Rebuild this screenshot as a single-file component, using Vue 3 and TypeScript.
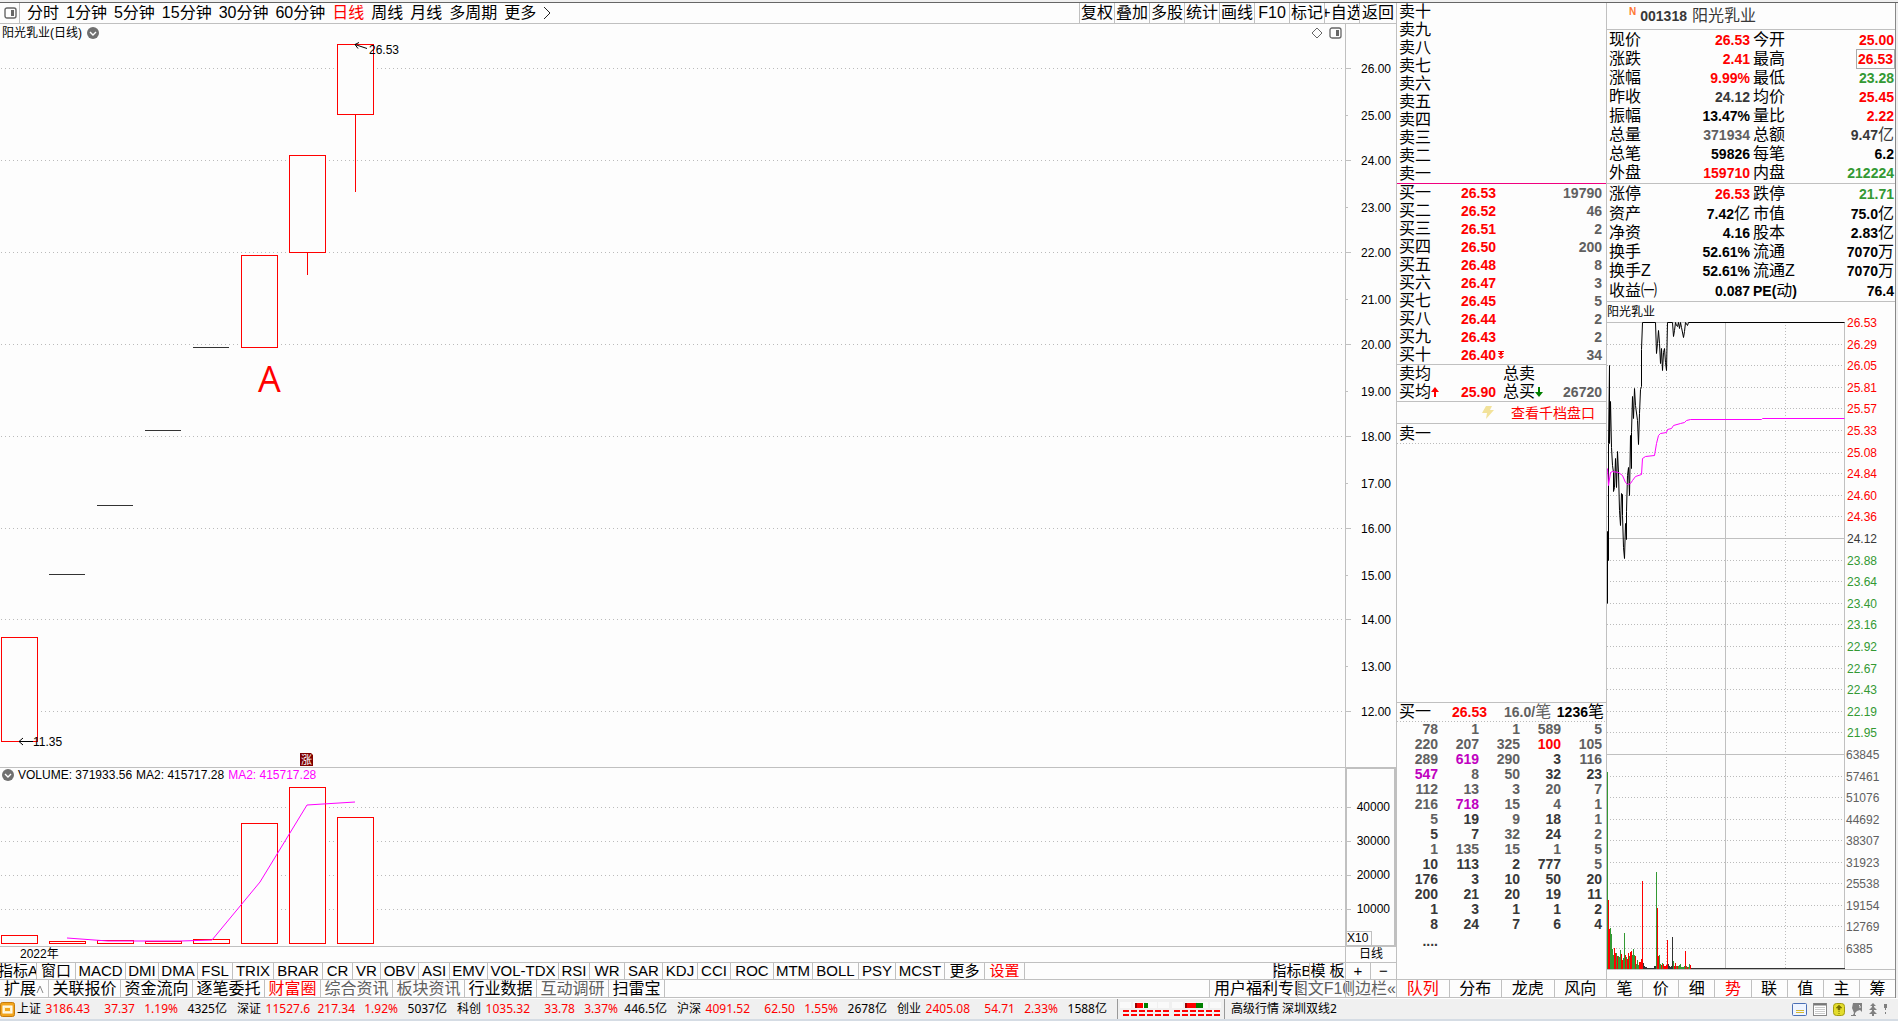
<script setup lang="ts">
type Tone = 'up' | 'down' | 'mute' | 'dim' | 'ink' | 'big'

interface Cell { label: string; value: string; unit?: string; tone: Tone; boxed?: boolean }
interface Tab { text: string; width: number; tone?: string }

const periods = ['分时', '1分钟', '5分钟', '15分钟', '30分钟', '60分钟', '日线', '周线', '月线', '多周期', '更多']
const tools = ['复权', '叠加', '多股', '统计', '画线', 'F10', '标记', '+自选', '返回']

const priceTicks = [44, 91, 136, 183, 228, 275, 320, 367, 412, 459, 504, 551, 595, 642, 687].map((y, i) => ({
  y,
  label: (26 - i).toFixed(2),
  major: i % 2 === 0,
}))
const flats = [
  { x: 49, y: 550 },
  { x: 97, y: 481 },
  { x: 145, y: 406 },
  { x: 193, y: 323 },
]
const candles = [
  { x: 1, top: 613, bottom: 717, low: 717 },
  { x: 241, top: 231, bottom: 323, low: 323 },
  { x: 289, top: 131, bottom: 228, low: 251 },
  { x: 337, top: 20, bottom: 90, low: 168 },
]
const volumeTops = [167, 173, 172, 173, 171, 55, 19, 49]
const volumeTicks = [
  { y: 39, label: '40000' },
  { y: 73, label: '30000' },
  { y: 107, label: '20000' },
  { y: 141, label: '10000' },
]

const indicators: Tab[] = [
  { text: '指标A', width: 37 }, { text: '窗口', width: 39 }, { text: 'MACD', width: 50 }, { text: 'DMI', width: 33 },
  { text: 'DMA', width: 39 }, { text: 'FSL', width: 35 }, { text: 'TRIX', width: 41 }, { text: 'BRAR', width: 49 },
  { text: 'CR', width: 30 }, { text: 'VR', width: 28 }, { text: 'OBV', width: 38 }, { text: 'ASI', width: 31 },
  { text: 'EMV', width: 38 }, { text: 'VOL-TDX', width: 71 }, { text: 'RSI', width: 31 }, { text: 'WR', width: 35 },
  { text: 'SAR', width: 38 }, { text: 'KDJ', width: 35 }, { text: 'CCI', width: 33 }, { text: 'ROC', width: 43 },
  { text: 'MTM', width: 39 }, { text: 'BOLL', width: 46 }, { text: 'PSY', width: 37 }, { text: 'MCST', width: 49 },
  { text: '更多', width: 40 }, { text: '设置', width: 40, tone: 'up' },
]
const indicatorTools: Tab[] = [
  { text: '指标B', width: 36 }, { text: '模 板', width: 36 }, { text: '+', width: 25 }, { text: '−', width: 25 },
]
const links: Tab[] = [
  { text: '扩展', width: 49 }, { text: '关联报价', width: 72 }, { text: '资金流向', width: 72 },
  { text: '逐笔委托', width: 72 }, { text: '财富圈', width: 56, tone: 'up' }, { text: '综合资讯', width: 72, tone: 'mute' },
  { text: '板块资讯', width: 72, tone: 'mute' }, { text: '行业数据', width: 72 }, { text: '互动调研', width: 72, tone: 'mute' },
  { text: '扫雷宝', width: 56 },
]
const linkTools: Tab[] = [
  { text: '用户福利专区', width: 88, tone: 'from-start' },
  { text: '图文F10', width: 48, tone: 'mute' },
  { text: '侧边栏«', width: 50, tone: 'mute from-end' },
]

const numerals = ['一', '二', '三', '四', '五', '六', '七', '八', '九', '十']
const asks = [...numerals].reverse().map((n) => `卖${n}`)
const bids = [
  ['26.53', '19790'], ['26.52', '46'], ['26.51', '2'], ['26.50', '200'], ['26.48', '8'],
  ['26.47', '3'], ['26.45', '5'], ['26.44', '2'], ['26.43', '2'], ['26.40', '34'],
].map(([price, volume], i) => ({ label: `买${numerals[i]}`, price, volume }))

// A suffix selects the shade: d dark, r red, p purple; plain values are grey.
const queue: string[][] = [
  ['78', '1', '1', '589', '5'],
  ['220', '207', '325', '100r', '105'],
  ['289', '619p', '290', '3d', '116'],
  ['547p', '8', '50', '32d', '23d'],
  ['112', '13', '3', '20', '7'],
  ['216', '718p', '15', '4', '1'],
  ['5', '19d', '9', '18d', '1'],
  ['5d', '7d', '32', '24d', '2'],
  ['1', '135', '15', '1', '5'],
  ['10d', '113d', '2d', '777d', '5'],
  ['176d', '3d', '10d', '50d', '20d'],
  ['200d', '21d', '20d', '19d', '11d'],
  ['1d', '3d', '1d', '1d', '2d'],
  ['8d', '24d', '7d', '6d', '4d'],
]
const shadeOf = (v: string): string => {
  const s = v.slice(-1)
  return s === 'd' ? 'dim' : s === 'r' ? 'up' : s === 'p' ? 'big' : 'mute'
}
const digits = (v: string): string => v.replace(/[a-z]/, '')

const quotes: Cell[][] = [
  [{ label: '现价', value: '26.53', tone: 'up' }, { label: '今开', value: '25.00', tone: 'up' }],
  [{ label: '涨跌', value: '2.41', tone: 'up' }, { label: '最高', value: '26.53', tone: 'up', boxed: true }],
  [{ label: '涨幅', value: '9.99%', tone: 'up' }, { label: '最低', value: '23.28', tone: 'down' }],
  [{ label: '昨收', value: '24.12', tone: 'dim' }, { label: '均价', value: '25.45', tone: 'up' }],
  [{ label: '振幅', value: '13.47%', tone: 'ink' }, { label: '量比', value: '2.22', tone: 'up' }],
  [{ label: '总量', value: '371934', tone: 'mute' }, { label: '总额', value: '9.47', unit: '亿', tone: 'dim' }],
  [{ label: '总笔', value: '59826', tone: 'ink' }, { label: '每笔', value: '6.2', tone: 'ink' }],
  [{ label: '外盘', value: '159710', tone: 'up' }, { label: '内盘', value: '212224', tone: 'down' }],
]
const facts: Cell[][] = [
  [{ label: '涨停', value: '26.53', tone: 'up' }, { label: '跌停', value: '21.71', tone: 'down' }],
  [{ label: '资产', value: '7.42', unit: '亿', tone: 'ink' }, { label: '市值', value: '75.0', unit: '亿', tone: 'ink' }],
  [{ label: '净资', value: '4.16', tone: 'ink' }, { label: '股本', value: '2.83', unit: '亿', tone: 'ink' }],
  [{ label: '换手', value: '52.61%', tone: 'ink' }, { label: '流通', value: '7070', unit: '万', tone: 'ink' }],
  [{ label: '换手Z', value: '52.61%', tone: 'ink' }, { label: '流通Z', value: '7070', unit: '万', tone: 'ink' }],
  [{ label: '收益㈠', value: '0.087', tone: 'ink' }, { label: 'PE(动)', value: '76.4', tone: 'ink' }],
]
const quoteBlocks = [quotes, facts]

const minutePrices = [
  '26.53', '26.29', '26.05', '25.81', '25.57', '25.33', '25.08', '24.84', '24.60', '24.36',
  '24.12', '23.88', '23.64', '23.40', '23.16', '22.92', '22.67', '22.43', '22.19', '21.95',
].map((label, i) => ({ label, y: Math.round(i * 21.6), tone: i < 10 ? 'up' : i === 10 ? 'dim' : 'down' }))
const minuteVolumes = ['63845', '57461', '51076', '44692', '38307', '31923', '25538', '19154', '12769', '6385'].map(
  (label, i) => ({ label, y: 432 + Math.round(i * 21.5) }),
)
const pricePath =
  '0,281 0,209 1,238 1,121 2,43 2,121 3,79 4,125 5,143 6,150 6,169 7,165 8,136 9,165 10,129 11,150 12,188 13,203 14,171 15,172 15,193 16,225 17,236 18,201 19,217 19,189 20,153 21,145 22,173 23,113 24,146 24,110 25,74 26,96 27,66 28,83 30,98 31,122 32,91 33,67 34,64 34,27 35,0 48,0 49,31 50,21 51,8 52,21 53,41 54,26 55,48 56,30 57,26 58,40 59,48 60,0 65,0 66,14 67,8 68,0 69,3 70,4 71,0 72,6 73,0 74,5 76,15 77,9 78,0 80,3 81,0 237,0'
const averagePath =
  '0,146 1,163 3,150 5,149 11,150 15,153 18,160 20,162 23,161 25,158 28,154 34,152 35,136 38,134 47,133 49,121 51,113 53,111 59,110 60,107 64,106 66,103 73,101 77,100 79,98 83,97 154,97 155,96 237,96'
const minuteBars = (
  'g197 r69 r40 g41 g35 g20 g14 r21 r16 g16 r13 g13 g12 g19 r15 r9 g11 g36 r14 g12 r10 r16 g13 r17 r18 g14 g20 g14 r13 g5 g9 g4 r7 r7 r10 r88 ' +
  'k6 k3 k2 k2 k1 k1 k1 k1 k1 k1 k1 k3 k3 g97 r61 r13 g14 g5 r4 g6 r5 r3 r3 r4 r29 k5 k3 k2 k3 k32 g8 r3 r6 g3 r3 g3 g4 g5 g2 g2 g2 g3 r18 g3 r2 g2 g5 r4'
).split(' ').map((s, x) => ({ x, h: Number(s.slice(1)), kind: s[0] }))

const markets = [
  ['上证', '3186.43', '37.37', '1.19%', '4325亿'],
  ['深证', '11527.6', '217.34', '1.92%', '5037亿'],
  ['科创', '1035.32', '33.78', '3.37%', '446.5亿'],
  ['沪深', '4091.52', '62.50', '1.55%', '2678亿'],
  ['创业', '2405.08', '54.71', '2.33%', '1588亿'],
]
const depthTabs = ['队列', '分布', '龙虎', '风向']
const detailTabs = ['笔', '价', '细', '势', '联', '值', '主', '筹']
</script>

<template>
  <div class="app">
    <div class="window-edge"></div>
    <main class="workspace">
      <section class="kline">
        <nav class="toolbar">
          <button class="panel-toggle" type="button" aria-label="面板">
            <svg width="14" height="12" viewBox="0 0 14 12">
              <rect x="1" y="1" width="11" height="10" rx="2" fill="none" stroke="#666" stroke-width="1.4" />
              <rect x="7" y="3" width="3" height="6" fill="#666" />
            </svg>
          </button>
          <div class="periods">
            <button v-for="p in periods" :key="p" type="button" :class="{ up: p === '日线' }">{{ p }}</button>
            <svg width="9" height="14" viewBox="0 0 9 14"><path d="M1 1L7 7L1 13" fill="none" stroke="#222" /></svg>
          </div>
          <div class="tools">
            <button v-for="t in tools" :key="t" type="button">{{ t }}</button>
          </div>
        </nav>

        <div class="chart price-chart">
          <div class="plot">
            <svg class="canvas">
              <line v-for="t in priceTicks.filter((p) => p.major)" :key="t.y" class="dots" x1="1" x2="100%" :y1="t.y + 0.5" :y2="t.y + 0.5" />
              <line v-for="f in flats" :key="f.x" class="flat" :x1="f.x" :x2="f.x + 36" :y1="f.y + 0.5" :y2="f.y + 0.5" />
              <g v-for="c in candles" :key="c.x">
                <rect class="clear" :x="c.x - 3" :y="c.top" width="43" :height="c.bottom - c.top + 1" />
                <rect class="candle" :x="c.x + 0.5" :y="c.top + 0.5" width="36" :height="c.bottom - c.top" />
                <line class="candle" :x1="c.x + 18.5" :x2="c.x + 18.5" :y1="c.bottom" :y2="c.low" />
              </g>
              <path class="pointer" d="M355 20.5L367 24.5M359 18.5L355 20.5L358 24.5" />
              <text class="mark" x="369" y="30">26.53</text>
              <path class="pointer" d="M19 717.5H33M23 714L19 717.5L23 721" />
              <text class="mark" x="33" y="722">11.35</text>
              <text class="letter" x="258" y="368">A</text>
              <path d="M300 729H311L313 731V742H300Z" fill="#7f0000" />
              <text class="badge" x="301" y="740">涨</text>
            </svg>
            <h1 class="plot-title">
              阳光乳业(日线)
              <svg width="12" height="12" viewBox="0 0 12 12">
                <circle cx="6" cy="6" r="6" fill="#707070" />
                <path d="M3 5L6 8L9 5" fill="none" stroke="#fff" stroke-width="1.4" />
              </svg>
            </h1>
            <div class="plot-icons">
              <svg width="12" height="12" viewBox="0 0 12 12"><path d="M6 1L11 6L6 11L1 6Z" fill="none" stroke="#666" /></svg>
              <svg width="13" height="12" viewBox="0 0 13 12">
                <rect x="1" y="1" width="11" height="10" rx="2" fill="none" stroke="#666" stroke-width="1.3" />
                <rect x="7" y="3" width="3" height="6" fill="#666" />
              </svg>
            </div>
          </div>
          <svg class="axis">
            <g v-for="t in priceTicks" :key="t.y">
              <line class="tick" x1="0" :x2="t.major ? 5 : 2" :y1="t.y + 0.5" :y2="t.y + 0.5" />
              <text class="mark" x="45" :y="t.y + 5" text-anchor="end">{{ t.label }}</text>
            </g>
          </svg>
        </div>

        <div class="chart volume-chart">
          <div class="plot">
            <svg class="canvas">
              <line v-for="t in volumeTicks" :key="t.y" class="dots" x1="1" x2="100%" :y1="t.y + 0.5" :y2="t.y + 0.5" />
              <g v-for="(top, i) in volumeTops" :key="i">
                <rect class="clear" :x="i * 48 - 2" :y="top" width="43" :height="176 - top" />
                <rect class="candle" :x="i * 48 + 1.5" :y="top + 0.5" width="36" :height="175 - top" />
              </g>
              <polyline class="average" points="67,170 108,173 181,173 212,172 260,114 307,37 355,34" />
            </svg>
            <h2 class="plot-title">
              <svg width="12" height="12" viewBox="0 0 12 12">
                <circle cx="6" cy="6" r="6" fill="#707070" />
                <path d="M3 5L6 8L9 5" fill="none" stroke="#fff" stroke-width="1.4" />
              </svg>
              <span>VOLUME: 371933.56</span><span>MA2: 415717.28</span><span class="pink">MA2: 415717.28</span>
            </h2>
          </div>
          <div class="axis framed">
            <svg class="canvas">
              <g v-for="t in volumeTicks" :key="t.y">
                <line class="tick" x1="0" x2="4" :y1="t.y - 0.5" :y2="t.y - 0.5" />
                <text class="mark" x="43" :y="t.y + 3" text-anchor="end">{{ t.label }}</text>
              </g>
            </svg>
            <span class="scale">X10</span>
          </div>
        </div>

        <div class="date-row"><span class="year">2022年</span><span class="cycle">日线</span></div>

        <nav class="tab-row indicators">
          <button v-for="t in indicators" :key="t.text" type="button" :class="t.tone" :style="{ width: t.width + 'px' }">{{ t.text }}</button>
          <span class="spacer"></span>
          <button v-for="t in indicatorTools" :key="t.text" type="button" :style="{ width: t.width + 'px' }">{{ t.text }}</button>
        </nav>
        <nav class="tab-row links">
          <button v-for="t in links" :key="t.text" type="button" :class="t.tone" :style="{ width: t.width + 'px' }">
            {{ t.text }}<svg v-if="t.text === '扩展'" width="8" height="10" viewBox="0 0 8 10"><path d="M1 9L4 2L7 9" fill="none" stroke="#888" /></svg>
          </button>
          <span class="spacer"></span>
          <button v-for="t in linkTools" :key="t.text" type="button" :class="t.tone" :style="{ width: t.width + 'px' }">{{ t.text }}</button>
        </nav>
      </section>

      <section class="depth">
        <table class="book asks">
          <tbody>
            <tr v-for="a in asks" :key="a"><th scope="row">{{ a }}</th><td></td><td></td></tr>
          </tbody>
        </table>
        <table class="book bids">
          <tbody>
            <tr v-for="b in bids" :key="b.label">
              <th scope="row">{{ b.label }}</th>
              <td class="up">{{ b.price }}<svg v-if="b.label === '买十'" width="6" height="9" viewBox="0 0 6 9"><path d="M0 0H6V1H4V2H6L3 5L0 2H2V1H0ZM0 5H2L3 6L4 5H6L3 8Z" fill="#f00" /></svg></td>
              <td class="mute">{{ b.volume }}</td>
            </tr>
          </tbody>
        </table>
        <table class="book totals">
          <tbody>
            <tr><th scope="row">卖均</th><td></td><th scope="row">总卖</th><td></td></tr>
            <tr>
              <th scope="row">买均<svg width="8" height="10" viewBox="0 0 8 10"><path d="M0 5L4 0L8 5H5V10H3V5Z" fill="#f00" /></svg></th>
              <td class="up">25.90</td>
              <th scope="row">总买<svg width="8" height="10" viewBox="0 0 8 10"><path d="M0 5L4 10L8 5H5V0H3V5Z" fill="#007f00" /></svg></th>
              <td class="mute">26720</td>
            </tr>
          </tbody>
        </table>
        <div class="more-depth">
          <svg width="12" height="13" viewBox="0 0 12 13"><path d="M4 0H10L8 4H12L4 13L5 7H0Z" fill="#f2e29a" /></svg>
          <a href="#">查看千档盘口</a>
        </div>
        <div class="queue-title">卖一</div>
        <div class="queue-space"></div>
        <div class="queue-head">
          <span>买一</span><b class="up">26.53</b><b class="mute">16.0/<i>笔</i></b><b>1236<i>笔</i></b>
        </div>
        <div class="queue-body">
          <table class="queue">
            <tbody>
              <tr v-for="(row, r) in queue" :key="r"><td v-for="(v, c) in row" :key="c" :class="shadeOf(v)">{{ digits(v) }}</td></tr>
              <tr class="etc"><td class="dim">....</td><td colspan="4"></td></tr>
            </tbody>
          </table>
        </div>
        <nav class="tab-row even">
          <button v-for="t in depthTabs" :key="t" type="button" :class="{ up: t === '队列' }">{{ t }}</button>
        </nav>
      </section>

      <section class="detail">
        <header class="stock"><sup>N</sup><b>001318</b><span>阳光乳业</span></header>
        <table v-for="(block, k) in quoteBlocks" :key="k" class="quote">
          <tbody>
            <tr v-for="(pair, r) in block" :key="r">
              <template v-for="c in pair" :key="c.label">
                <th scope="row"><template v-if="c.label === 'PE(动)'"><b>PE(</b>动<b>)</b></template><template v-else>{{ c.label }}</template></th>
                <td :class="c.tone"><span :class="{ boxed: c.boxed }">{{ c.value }}<i v-if="c.unit">{{ c.unit }}</i></span></td>
              </template>
            </tr>
          </tbody>
        </table>
        <h2 class="minute-title">阳光乳业</h2>
        <div class="minute">
          <svg class="canvas">
            <g v-for="p in minutePrices" :key="p.label">
              <line :class="p.y === 0 || p.y === 216 ? 'solid' : 'fine'" x1="0" x2="237" :y1="p.y + 0.5" :y2="p.y + 0.5" />
              <text class="mark" :class="p.tone" x="240" :y="p.y + 5">{{ p.label }}</text>
            </g>
            <g v-for="(v, i) in minuteVolumes" :key="v.label">
              <line :class="i === 0 ? 'solid' : 'fine'" x1="0" x2="237" :y1="v.y + 0.5" :y2="v.y + 0.5" />
              <text class="mark mute" x="239" :y="v.y + 5">{{ v.label }}</text>
            </g>
            <line class="fine" x1="59.5" x2="59.5" y1="0" y2="647" />
            <line class="solid" x1="118.5" x2="118.5" y1="0" y2="647" />
            <line class="fine" x1="178.5" x2="178.5" y1="0" y2="647" />
            <line class="solid" x1="237.5" x2="237.5" y1="0" y2="647" />
            <line class="solid" x1="0" x2="100%" y1="647.5" y2="647.5" />
            <rect v-for="b in minuteBars" :key="b.x" :class="'bar-' + b.kind" :x="b.x" :y="647 - b.h" width="1" :height="b.h" />
            <rect class="bar-k" x="84" y="646" width="154" height="1" />
            <g transform="translate(.5 .5)">
              <polyline class="trace" :points="pricePath" />
              <polyline class="average" :points="averagePath" />
            </g>
          </svg>
        </div>
        <nav class="tab-row even">
          <button v-for="t in detailTabs" :key="t" type="button" :class="{ up: t === '势' }">{{ t }}</button>
        </nav>
      </section>
    </main>

    <footer class="status">
      <svg class="home" width="15" height="15" viewBox="0 0 15 15">
        <rect x=".5" y=".5" width="14" height="14" rx="2" fill="#f2a51c" stroke="#c77b0b" />
        <rect x="3" y="4" width="9" height="7" fill="#fff2c4" stroke="#fff" />
        <rect x="5" y="6" width="5" height="3" fill="#f2a51c" />
      </svg>
      <div v-for="m in markets" :key="m[0]" class="market">
        <span>{{ m[0] }}</span><span class="up">{{ m[1] }}</span><span class="up">{{ m[2] }}</span><span class="up">{{ m[3] }}</span><span>{{ m[4] }}</span>
      </div>
      <div class="heat">
        <svg width="102" height="16" viewBox="0 0 102 16">
          <g fill="#fafafa">
            <rect x="0" y="1" width="11" height="6" /><rect x="13" y="1" width="11" height="6" /><rect x="26" y="1" width="11" height="6" /><rect x="38" y="1" width="11" height="6" />
            <rect x="52" y="1" width="11" height="6" /><rect x="65" y="1" width="11" height="6" /><rect x="77" y="1" width="11" height="6" /><rect x="90" y="1" width="11" height="6" />
          </g>
          <path d="M15 2h2v5h-2zM65 2h2v5h-2z" fill="#900" />
          <path d="M17 2h6v5h-6zM67 2h9v5h-9z" fill="#f00" />
          <path d="M24 2h4v5h-4zM76 2h7v5h-7z" fill="#008000" />
          <path d="M3 10H50M3 14H50M54 10H101M54 14H101" stroke="#f00" stroke-width="2" stroke-dasharray="6 2" />
        </svg>
      </div>
      <span class="server">高级行情 深圳双线2</span>
      <span class="spacer"></span>
      <div class="tray">
        <svg width="15" height="13" viewBox="0 0 15 13"><rect x=".5" y=".5" width="14" height="12" rx="1" fill="#eef4ff" stroke="#4a6fb5" /><path d="M4 7.5H12M4 9.5H12" stroke="#d6ba30" /></svg>
        <svg width="14" height="13" viewBox="0 0 14 13"><rect x=".5" y=".5" width="13" height="12" fill="#fff" stroke="#888" /><path d="M1 1.5H13" stroke="#777" stroke-width="2" /><path d="M2 4.5H12M2 6.5H12M2 8.5H12M2 10.5H12" stroke="#ccc" /></svg>
        <svg width="12" height="13" viewBox="0 0 12 13"><rect x=".5" y=".5" width="11" height="12" rx="3" fill="#e3dc2c" stroke="#a39b10" /><path d="M3 5L6 2L9 5H7V7H5V5ZM5 8.5H7M5 10.5H7" fill="#746e00" stroke="#746e00" stroke-width=".5" /></svg>
        <svg width="12" height="13" viewBox="0 0 12 13"><path d="M2 0H11V9L9 7L6 8L4 10V12H5V13H0V12H2L3 10L1 5Z" fill="#808080" /><path d="M8 2L9 3V5" fill="none" stroke="#eee" /></svg>
        <svg width="8" height="13" viewBox="0 0 8 13"><path d="M4 0L7 3H5V4L8 7H5V8L8 11H5V13H3V11H0L3 8V7H0L3 4V3H1Z" fill="#808080" /></svg>
        <svg width="5" height="13" viewBox="0 0 5 13"><path d="M1 1H4V5H3V7H2V5H1ZM2 9H3V11H2Z" fill="#808080" /></svg>
      </div>
    </footer>
    <div class="task-edge"></div>
  </div>
</template>

<style>
body { margin: 0; }
</style>

<style scoped>
.app {
  --line: #c0c0c0;
  --red: #f00;
  --green: #339933;
  min-height: 100vh;
  display: flex;
  flex-direction: column;
  background: #fdfdfd;
  color: #000;
  font: 16px/16px "Liberation Sans", "Noto Sans CJK SC", sans-serif;
  white-space: nowrap;
}
.window-edge { height: 2px; background: #f0f0f0; border-bottom: 1px solid #666; }
.workspace { flex: 1; display: flex; padding-right: 2px; background: #f0f0f0; }
.workspace > section { display: flex; flex-direction: column; background: #fdfdfd; border-right: 1px solid var(--line); box-sizing: border-box; }
.kline { flex: 1; min-width: 0; }
.depth { width: 210px; }
.workspace > .detail { width: 289px; border-right-color: #888; }
button { margin: 0; padding: 0; border: 0; background: none; color: inherit; font: inherit; white-space: nowrap; overflow: hidden; }
h1, h2 { margin: 0; font-size: 12px; font-weight: 400; line-height: 12px; }
table { width: 100%; border-collapse: separate; border-spacing: 0; table-layout: fixed; }
th, td { padding: 0; font-weight: 400; text-align: left; }
td { font-size: 14px; font-weight: 700; }
i { font-style: normal; font-weight: 400; font-size: 16px; }
b { font-size: 14px; }
.up { color: var(--red); fill: var(--red); }
.down { color: var(--green); fill: var(--green); }
.mute { color: #606060; fill: #606060; }
.dim { color: #383838; fill: #383838; }
.big { color: #c000c0; }
.pink { color: #f0f; }
.spacer { flex: 1; }

.toolbar { display: flex; height: 20px; border-bottom: 1px solid var(--line); }
.panel-toggle { width: 20px; padding-left: 2px; border-right: 1px solid var(--line); display: flex; align-items: center; justify-content: center; }
.periods { flex: 1; display: flex; align-items: center; gap: 7px; padding-left: 7px; }
.tools { display: flex; }
.tools button { width: 35px; border-left: 1px solid var(--line); display: flex; align-items: center; justify-content: center; }
.tools button:last-child { width: 37px; }

.chart { display: flex; border-bottom: 1px solid var(--line); }
.price-chart { flex: 1; min-height: 740px; }
.volume-chart { height: 178px; }
.plot { flex: 1; position: relative; min-width: 0; }
.canvas { display: block; width: 100%; height: 100%; overflow: visible; }
.plot-title { position: absolute; left: 2px; top: 3px; display: flex; align-items: center; gap: 5px; }
.volume-chart .plot-title { top: 1px; gap: 4px; }
.plot-icons { position: absolute; right: 3px; top: 3px; display: flex; gap: 6px; }
.axis { width: 50px; border-left: 1px solid var(--line); }
.framed { width: 47px; border: 2px solid var(--line); border-top-width: 1px; border-bottom-width: 1px; position: relative; }
.scale { position: absolute; left: 0; bottom: 0; width: 24px; border: 1px solid var(--line); border-left: 0; border-bottom: 0; font-size: 12px; line-height: 13px; }
.dots { stroke: #bbb; stroke-dasharray: 1 3; }
.fine { stroke: #bbb; stroke-dasharray: 1 2; }
.solid, .tick { stroke: var(--line); }
.dots, .fine, .solid, .tick, .candle, .flat { shape-rendering: crispEdges; }
.clear { fill: #fdfdfd; }
.candle { fill: none; stroke: var(--red); }
.flat { stroke: #333; }
.pointer { fill: none; stroke: #000; }
.average { fill: none; stroke: #f0f; }
.trace { fill: none; stroke: #000; }
.mark { font-size: 12px; }
.letter { font: 36px "Open Sans", "Noto Sans", sans-serif; fill: var(--red); }
.badge { font-size: 11px; fill: #fff; }

.date-row { display: flex; height: 15px; border-bottom: 1px solid var(--line); font-size: 12px; line-height: 15px; }
.year { flex: 1; padding-left: 20px; }
.cycle { width: 50px; border-left: 1px solid var(--line); text-align: center; }

.tab-row { display: flex; height: 17px; border-bottom: 1px solid var(--line); }
.tab-row button { box-sizing: border-box; border-right: 1px solid var(--line); display: flex; align-items: center; justify-content: center; flex-shrink: 0; }
.tab-row .spacer { border-right: 1px solid var(--line); }
.tab-row button:last-child { border-right: 0; }
.tab-row .from-start { justify-content: flex-start; padding-left: 4px; }
.tab-row .from-end { justify-content: flex-end; }
.indicators { height: 16px; font-size: 15px; }
.even { border-top: 1px solid var(--line); }
.even button { flex: 1; }

.book tr { height: 18px; }
.book th:first-child { width: 62px; padding-left: 2px; }
.book td:last-child { text-align: right; padding-right: 4px; }
.book td svg { margin-left: 2px; }
.asks { border-bottom: 1px solid #f0007f; }
.bids, .totals { border-bottom: 1px solid var(--line); }
.totals td:nth-child(2) { width: 42px; }
.more-depth { display: flex; align-items: center; gap: 17px; height: 21px; padding-left: 85px; border-bottom: 1px solid var(--line); font-size: 14px; }
.more-depth a { color: var(--red); text-decoration: none; }
.queue-title, .queue-head { padding: 0 2px; background: repeating-linear-gradient(90deg, #bbb 0 1px, transparent 1px 3px) 0 100% / 100% 1px no-repeat; }
.queue-title { height: 20px; line-height: 19px; }
.queue-space { flex: 1; border-bottom: 1px solid var(--line); }
.queue-head { display: grid; grid-template-columns: 53px 52px 1fr auto; height: 19px; line-height: 18px; }
.queue-body { height: 257px; }
.queue tr { height: 15px; line-height: 15px; }
.queue td { text-align: right; width: 41px; }
.queue td:last-child { padding-right: 4px; }
.queue .etc { height: 18px; line-height: 18px; }

.stock { display: flex; align-items: center; height: 26px; padding-left: 22px; border-bottom: 1px solid var(--line); color: #383838; }
.stock sup { font-size: 10px; font-weight: 700; line-height: 18px; align-self: flex-start; color: #ff7733; }
.stock b { padding: 0 5px 0 4px; }
.quote { border-bottom: 1px solid var(--line); }
.quote tr { height: 19px; }
.quote tr:last-child { height: 20px; }
.quote + .quote tr:first-child { height: 20px; }
.quote + .quote tr:last-child { height: 21px; }
.quote th { width: 52px; padding-left: 2px; }
.quote td { text-align: right; padding-right: 1px; }
.quote .boxed { outline: 1px solid #aaa; padding: 1px; }
.minute-title { height: 20px; line-height: 21px; }
.minute { flex: 1; }
.bar-g { fill: var(--green); }
.bar-r { fill: var(--red); }
.bar-k { fill: #333; }

.status { display: flex; align-items: center; height: 20px; background: #f0f0f0; border-top: 1px solid #fff; font: 12px/16px "Noto Sans", "Noto Sans CJK SC", sans-serif; }
.home { margin-right: 2px; }
.market { display: grid; grid-template-columns: 28px 45px 45px 43px 49px; width: 220px; text-align: right; }
.market span:first-child { text-align: left; }
.heat { display: flex; align-items: center; height: 20px; padding: 0 2px; border: 1px solid #999; border-width: 0 1px; }
.server { padding-left: 6px; }
.tray { display: flex; gap: 6px; padding-right: 10px; }
.task-edge { height: 2px; background: #d5dce4; }
</style>
